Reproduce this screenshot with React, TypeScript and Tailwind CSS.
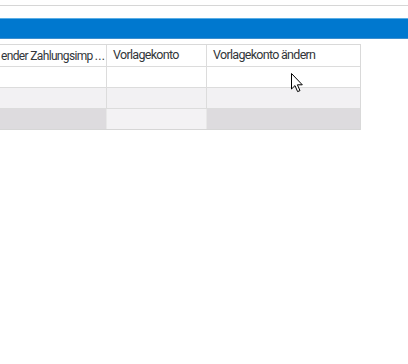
import React from "react";

const Cursor = () => (
  <svg width="13" height="20" viewBox="0 0 13 20" className="absolute left-[291px] top-[73px]">
    <path
      d="M0.5 0.5 L0.5 16 L4 12.6 L6.6 18.6 L9 17.6 L6.4 11.8 L11.3 11.8 Z"
      fill="#fff"
      stroke="#000"
      strokeWidth="1"
      strokeLinejoin="round"
    />
  </svg>
);

export default function App() {
  const font = { fontFamily: "Roboto, 'Liberation Sans', sans-serif" };
  return (
    <div className="relative w-[408px] h-[364px] bg-white overflow-hidden" style={font}>
      <div className="h-[5px]" />
      <div className="h-px bg-[#d6d6d6]" />
      <div className="h-[12px]" />
      <div className="h-px bg-[#5aaee6]" />
      <div className="h-[19px] bg-[#0078cf]" />
      <div className="h-px bg-[#3d8fcf]" />
      <div className="h-[5px]" />
      <div className="w-[361px] overflow-hidden">
        <div className="flex flex-col border-t border-[#d9d9d9] border-r w-[361px]">
          {/* header */}
          <div className="flex h-[22px] border-b border-[#dcdcdc] text-[12.5px] text-[#32363a] tracking-[-0.7px]">
            <div className="w-[107px] border-r border-[#dcdcdc] whitespace-nowrap flex items-center pl-[1px] text-[12px] tracking-[-0.65px]">
              ender Zahlungsimp<span className="tracking-[0.3px] pl-[2px]">...</span>
            </div>
            <div className="w-[100px] border-r border-[#dcdcdc] flex items-center pl-[6px] whitespace-nowrap">
              Vorlagekonto
            </div>
            <div className="flex-1 flex items-center pl-[6px] whitespace-nowrap">Vorlagekonto ändern</div>
          </div>
          <div className="flex h-[21px] border-b border-[#dcdcdc] bg-white">
            <div className="w-[107px] border-r border-[#dcdcdc]" />
            <div className="w-[100px] border-r border-[#dcdcdc]" />
            <div className="flex-1" />
          </div>
          <div className="flex h-[21px] border-b border-[#dcdcdc] bg-[#f2f1f3]">
            <div className="w-[107px] border-r border-[#dcdcdc]" />
            <div className="w-[100px] border-r border-[#dcdcdc]" />
            <div className="flex-1" />
          </div>
          <div className="flex h-[21px] border-b border-[#d6d6d6] bg-[#dddbde]">
            <div className="w-[107px] border-r border-[#e8e8e8]" />
            <div className="w-[100px] bg-[#f3f2f4] border-r border-[#e8e8e8]" />
            <div className="flex-1" />
          </div>
        </div>
      </div>
      <Cursor />
    </div>
  );
}
